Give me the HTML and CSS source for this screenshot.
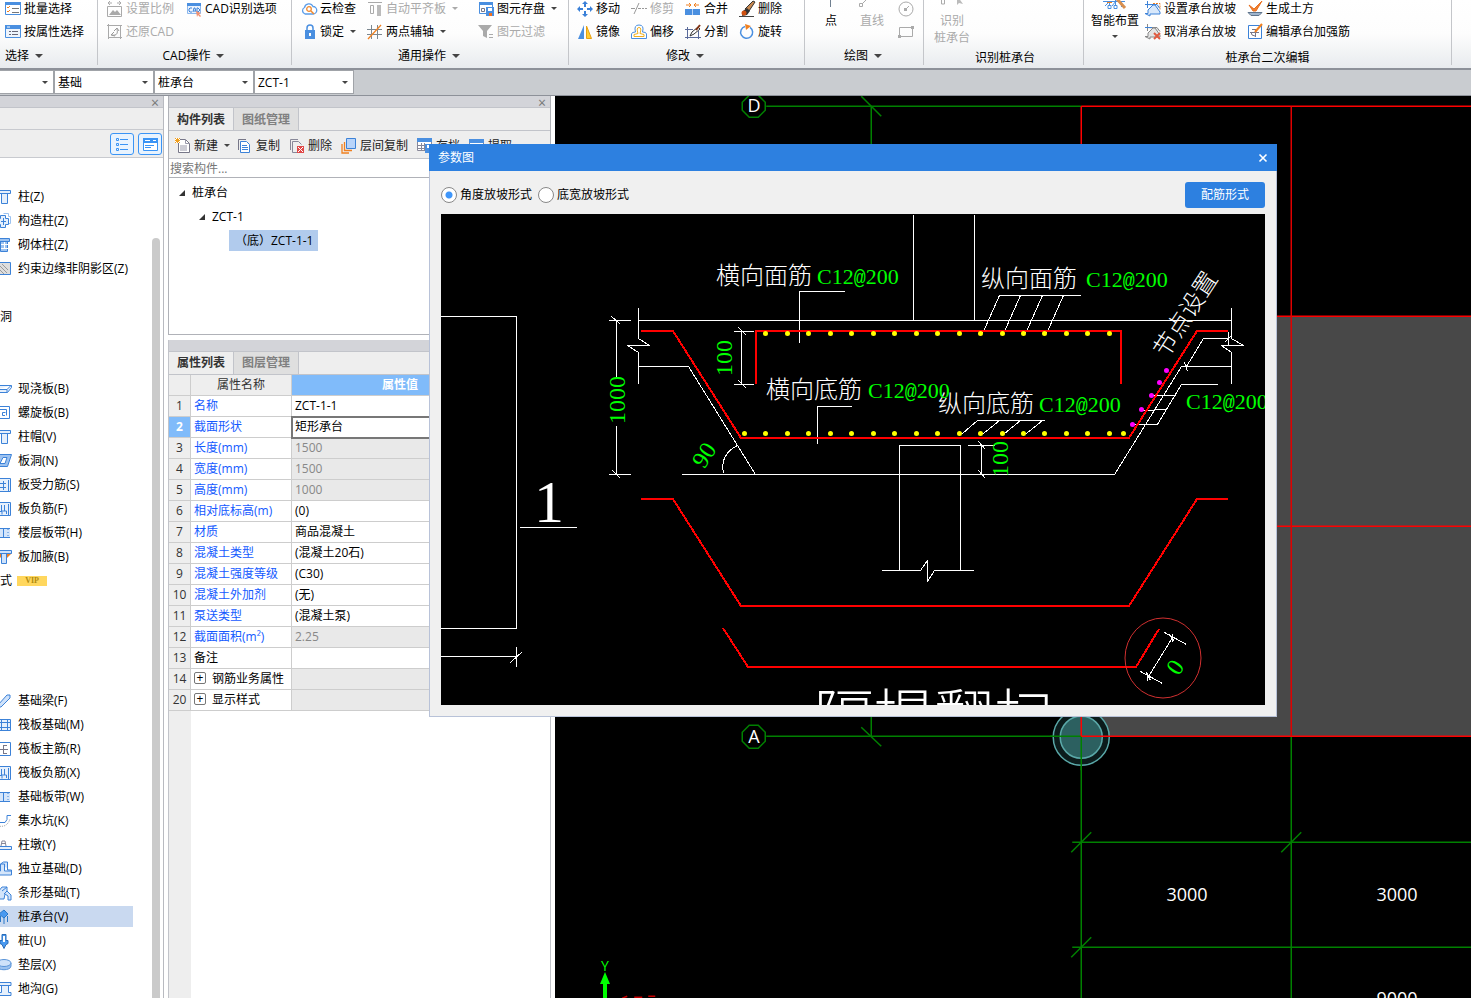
FILE: index.html
```html
<!DOCTYPE html>
<html lang="zh-CN">
<head>
<meta charset="utf-8">
<title>桩承台 - 参数图</title>
<link rel="stylesheet" href="styles.css">
</head>
<body>
<div class="app">
<header class="ribbon">
  <section class="group g-select">
    <div class="tools"><div class="stack">
      <button class="tool"><svg class="icon" viewBox="0 0 16 16"><path d="M.5 1.500h15v12H.5z" fill="#fff" stroke="#4a8fe0"/><path d="M0 1h16v3H0z" fill="#4a8fe0"/><path d="M2 6l1 1 2-2M2 10l1 1 2-2" stroke="#f08020" fill="none"/><path d="M7 7.500h7M7 11.500h7" stroke="#777"/></svg>批量选择</button>
      <button class="tool"><svg class="icon" viewBox="0 0 16 16"><path d="M.5 1.500h15v12H.5z" fill="#eef4fc" stroke="#4a8fe0"/><path d="M0 1h16v4H0z" fill="#4a8fe0"/><path d="M2 3h3" stroke="#fff"/><path d="M4 7.500h2m1 0h6M4 10.500h2m1 0h6" stroke="#667"/></svg>按属性选择</button>
    </div></div>
    <button class="caption">选择<i class="caret"></i></button>
  </section>
  <section class="group g-cad">
    <div class="tools"><div class="stack">
      <button class="tool" disabled><svg class="icon" viewBox="0 0 16 16"><path d="M.5 5.500h14v10H.5z" fill="none" stroke="#aaa"/><path d="M2 14l4-5 2 2 2-2 4 5z" fill="#aaa"/><path d="M1 2h4M10 2h4M3 0L1 2l2 2M12 0l2 2-2 2" stroke="#aaa" fill="none"/></svg>设置比例</button>
      <button class="tool" disabled><svg class="icon" viewBox="0 0 16 16"><path d="M1.500 0v15M0 1.500h15M13.500 1v14M1 13.500h14" fill="none" stroke="#aaa"/><path d="M5 11c5 1 6-2 5-6M7 8l-3 3 4 1M7 7l3-3 2 3" stroke="#999" fill="none"/></svg>还原CAD</button>
    </div><div class="stack">
      <button class="tool"><svg class="icon" viewBox="0 0 16 16"><path d="M1.500 2.500h13v10h-13z" fill="#eaf2fd" stroke="#8cb8ee"/><path d="M1 2h14v3H1z" fill="#4a8fe0"/><path d="M6 7H4l-1 1v2l1 1h2M7 11l1-4h1l1 4M8 10h1M11 7h1l2 2-2 2h-1z" fill="none" stroke="#3c82d8"/><path d="M10 10l5 2-2 1 2 2-1 1-2-2-1 2z" fill="#f09070"/></svg>CAD识别选项</button>
    </div></div>
    <button class="caption">CAD操作<i class="caret"></i></button>
  </section>
  <section class="group g-common">
    <div class="tools"><div class="stack">
      <button class="tool"><svg class="icon" viewBox="0 0 16 16"><path d="M4 13a3.500 3.500 0 0 1-.5-6.500 4.500 4.500 0 0 1 8.500-1 3.700 3.700 0 0 1 0 7.500z" fill="#fff" stroke="#5a9ce8" stroke-width="1.300"/><circle cx="8" cy="8" r="2.300" fill="none" stroke="#f08a30" stroke-width="1.300"/><path d="M10 10l3 3" stroke="#f08a30" stroke-width="1.500"/></svg>云检查</button>
      <button class="tool"><svg class="icon" viewBox="0 0 16 16"><path d="M6 7V4a3 3 0 0 1 6 0v3" fill="none" stroke="#4a8fe0" stroke-width="1.500"/><path d="M4 6h10v9H4z" fill="#4a8fe0"/><path d="M9 9v3" stroke="#fff" stroke-width="2"/></svg>锁定<i class="caret small"></i></button>
    </div><div class="stack wide-gap">
      <button class="tool" disabled><svg class="icon" viewBox="0 0 16 16"><path d="M1 1.500h14" stroke="#aaa"/><path d="M3.500 4.500h3v8h-3z" fill="none" stroke="#aaa"/><path d="M10 4h4v11h-4z" fill="#bbb"/></svg>自动平齐板<i class="caret small"></i></button>
      <button class="tool"><svg class="icon" viewBox="0 0 16 16"><path d="M4.500 1v14M10.500 1v14M0 5.500h15M0 10.500h15" stroke="#7b8790"/><path d="M1 15L14 1" stroke="#f08020" stroke-width="1.300"/></svg>两点辅轴<i class="caret small"></i></button>
    </div><div class="stack">
      <button class="tool"><svg class="icon" viewBox="0 0 16 16"><path d="M1.500 1.500h13v11h-13z" fill="#fff" stroke="#4a8fe0"/><path d="M1 1h14v3H1z" fill="#4a8fe0"/><path d="M3.500 7.500h3v3h-3z" fill="none" stroke="#778"/><path d="M8 6h8v9H8z" fill="#4a8fe0"/><path d="M10 7h4v3h-4z" fill="#fff"/><path d="M11 12h3v3h-3z" fill="#f07020"/></svg>图元存盘<i class="caret small"></i></button>
      <button class="tool" disabled><svg class="icon" viewBox="0 0 16 16"><path d="M0 1h14L9 7v7l-4-2V7z" fill="#aaa"/><path d="M11 10.500h4M11 13.500h4" stroke="#aaa"/></svg>图元过滤</button>
    </div></div>
    <button class="caption">通用操作<i class="caret"></i></button>
  </section>
  <section class="group g-modify">
    <div class="tools"><div class="stack">
      <button class="tool"><svg class="icon" viewBox="0 0 16 16"><path d="M8 0l3 3H9v3H7V3H5zM8 16l3-3H9v-3H7v3H5zM0 8l3-3v2h3v2H3v2zM16 8l-3-3v2h-3v2h3v2z" fill="#3a80d8"/></svg>移动</button>
      <button class="tool"><svg class="icon" viewBox="0 0 16 16"><path d="M1 15L7 1v14z" fill="#4a8fe0"/><path d="M9.500 2v12.500h5z" fill="#fc3" stroke="#e8a010"/></svg>镜像</button>
    </div><div class="stack">
      <button class="tool" disabled><svg class="icon" viewBox="0 0 16 16"><path d="M0 7.500h4M7 7.500h3M11 7.500h2M14 7.500h2M3 13L8 2" stroke="#999"/></svg>修剪</button>
      <button class="tool"><svg class="icon" viewBox="0 0 16 16"><path d="M.5 14.500V10q0-2 4-2-2-7 3.500-7t3.500 7q4 0 4 2v4.500z" fill="#fff" stroke="#4a8fe0"/><path d="M3 12.500v-2l4-1q-2-6 1-6t1 6l4 1v2z" fill="#fff" stroke="#f0b020"/></svg>偏移</button>
    </div><div class="stack">
      <button class="tool"><svg class="icon" viewBox="0 0 16 16"><path d="M0 8h15v6H0z" fill="#4a8fe0"/><path d="M7.500 8v6" stroke="#b8d4f8"/><path d="M1 4h5M9 4h5M4 2l2 2-2 2M11 2L9 4l2 2" stroke="#f08020" fill="none"/></svg>合并</button>
      <button class="tool"><svg class="icon" viewBox="0 0 16 16"><path d="M2.500 3v12M13.500 7v8M0 5.500h8M0 13.500h16" stroke="#5a6a9a" fill="none"/><path d="M5 12l2-4 6-5 2 2-6 5z" fill="#fff" stroke="#333"/><path d="M11 6l4-5" stroke="#803010" stroke-width="2"/></svg>分割</button>
    </div><div class="stack">
      <button class="tool"><svg class="icon" viewBox="0 0 16 16"><path d="M14 0l2 1-6 9-4-2z" fill="#c88850" stroke="#333"/><path d="M8 7l3 3-3 4-5 1 1-5z" fill="#333"/><circle cx="5" cy="12" r="2.500" fill="#d05010"/><path d="M0 15.500h15" stroke="#444"/></svg>删除</button>
      <button class="tool"><svg class="icon" viewBox="0 0 16 16"><path d="M6 2.500a6 6 0 1 0 5 .8" fill="none" stroke="#4a8fe0" stroke-width="1.500"/><path d="M6 0l6 2-5 4z" fill="#f08020"/></svg>旋转</button>
    </div></div>
    <button class="caption">修改<i class="caret"></i></button>
  </section>
  <section class="group g-draw">
    <div class="tools">
      <button class="big"><svg class="icon" viewBox="0 0 16 16"><path d="M7.500 0v10" stroke="#708090"/></svg>点</button>
      <button class="big" disabled><svg class="icon" viewBox="0 0 16 16"><path d="M-3 8L5 0" stroke="#aaa"/><path d="M-4.500 6.500h3v3h-3z" fill="#fff" stroke="#aaa"/></svg>直线</button>
      <div class="stack">
        <button class="tool" aria-label="圆" disabled><svg class="icon" viewBox="0 0 16 16"><circle cx="8" cy="8" r="7" fill="none" stroke="#aaa"/><path d="M8 8l3-3" stroke="#aaa"/><path d="M6 7h3v3H6z" fill="#aaa"/></svg></button>
        <button class="tool" aria-label="矩形" disabled><svg class="icon" viewBox="0 0 16 16"><path d="M1.500 3.500h13v9h-13z" fill="none" stroke="#aaa"/><path d="M13 2h3v3h-3zM0 11h3v3H0z" fill="#aaa"/></svg></button>
      </div>
    </div>
    <button class="caption">绘图<i class="caret"></i></button>
  </section>
  <section class="group g-identify">
    <div class="tools"><button class="big" disabled><svg class="icon" viewBox="0 0 16 16"><path d="M-2.500 -3h3v10h-3z" fill="none" stroke="#aaa"/><path d="M13 0v8l2-2 4 1-5-7z" fill="#bbb"/></svg>识别<br>桩承台</button></div>
    <div class="caption">识别桩承台</div>
  </section>
  <section class="group g-edit">
    <div class="tools">
      <button class="big"><svg class="icon xl" viewBox="0 0 28 16"><path d="M2 4.500h22M8.500 4v7M14.500 3v8M20.500 4v6M4 9l5-5M11 9l4-5" stroke="#4a8fe0" fill="none"/><path d="M7 8.500h3v3H7zM13 8.500h3v3h-3z" fill="#fff" stroke="#4a8fe0"/><path d="M16 2l8 9" stroke="#d89050" stroke-width="3"/><path d="M6 5.500h5" stroke="#f08020"/></svg>智能布置<i class="caret small"></i></button>
      <div class="stack">
        <button class="tool"><svg class="icon" viewBox="0 0 16 16"><path d="M2.500 0v7M0 3.500h12l3 4M0 12.500h3L3 9l5-5h2l5 7v2H5v2z" fill="#d8e8fb" stroke="#3c82d8"/><path d="M8 2.500h7v6" stroke="#f08020" stroke-dasharray="2 1" fill="none"/></svg>设置承台放坡</button>
        <button class="tool"><svg class="icon" viewBox="0 0 16 16"><path d="M2.500 0v7M0 3.500h12l3 4M0 12.500h3L3 9l5-5h2l5 7v2H5v2z" fill="#e4e4e4" stroke="#888"/><path d="M0 3.500h7" stroke="#3c82d8"/><path d="M9 9l6 6M15 9l-6 6" stroke="#e05a40" stroke-width="2"/></svg>取消承台放坡</button>
      </div>
      <div class="stack">
        <button class="tool"><svg class="icon" viewBox="0 0 16 16"><path d="M2 4l5 4 8-8-6 10H6z" fill="#f08030" stroke="#e87020"/><path d="M1 11.500h14l-3 3H4z" fill="#9fb4cc" stroke="#60748c"/></svg>生成土方</button>
        <button class="tool"><svg class="icon" viewBox="0 0 16 16"><path d="M1.500 1.500h13v13h-13z" fill="#fff" stroke="#3c82d8"/><path d="M3 8.500h9M8.500 5v8M4 8q0 4 4 4M5 5.500h4" stroke="#778" fill="none"/><path d="M8 8l7-8" stroke="#f08020" stroke-width="2"/></svg>编辑承台加强筋</button>
      </div>
    </div>
    <div class="caption">桩承台二次编辑</div>
  </section>
</header>

<nav class="selectors">
  <label class="combo first"><select aria-label="楼层"><option></option></select></label>
  <label class="combo"><select aria-label="构件分类"><option>基础</option></select></label>
  <label class="combo"><select aria-label="构件类型"><option>桩承台</option></select></label>
  <label class="combo"><select aria-label="构件"><option>ZCT-1</option></select></label>
</nav>

<main class="work">
  <aside class="nav-panel">
    <div class="panel-bar"><button class="close" aria-label="关闭">×</button></div>
    <div class="nav-title"></div>
    <div class="nav-tools">
      <button aria-label="列表视图"><svg viewBox="0 0 22 20"><path d="M5.500 4.500h2v2h-2zM5.500 9.500h2v2h-2zM5.500 14.500h2v2h-2zM9 5.500h8M9 10.500h8M9 15.500h8" fill="none" stroke="#3a94f5"/></svg></button>
      <button aria-label="窗口视图"><svg viewBox="0 0 22 20"><path d="M4.500 4.500h14v12h-14z" fill="#fff" stroke="#3a94f5"/><path d="M4 4h15v5H4z" fill="#3a94f5"/><path d="M6 6.500h5M14 6.500h3" stroke="#fff"/><path d="M6 11.500h9M6 13.500h6" stroke="#3a94f5"/></svg></button>
    </div>
    <div class="nav-list">
      <div class="items">
        <button class="item"><svg class="icon" viewBox="0 0 16 16"><path d="M0 1.500h14.500v3H0M5.500 4.500h6v10h-6z" fill="#e6f0fc" stroke="#3c82d8"/></svg>柱(Z)</button>
        <button class="item"><svg class="icon" viewBox="0 0 16 16"><path d="M7.500.5h5v3h2v7h-2" fill="none" stroke="#9cc2f0"/><path d="M4.500 2.500h5v3h3v6h-3v3h-5v-3H2v-6h2.500z" fill="#e6f0fc" stroke="#3c82d8"/><path d="M7.500 5v7M5 8.500h5" stroke="#3c82d8"/></svg>构造柱(Z)</button>
        <button class="item"><svg class="icon" viewBox="0 0 16 16"><path d="M0 1.500h13.500v3H0M4.500 4.500h7v10h-7z" fill="#9cc2f0" stroke="#3c82d8"/><path d="M5 7.500h7M5 11.500h7M8.500 5v3M8.500 8v4" stroke="#fff"/></svg>砌体柱(Z)</button>
        <button class="item"><svg class="icon" viewBox="0 0 16 16"><path d="M0 1.500h14.500v12H0" fill="#ddd" stroke="#3c82d8"/><path d="M2 7l6 6M2 3l9 9M6 3l6 6" stroke="#999"/></svg>约束边缘非阴影区(Z)</button>
      </div>
      <div class="items gap-one"><button class="heading">洞</button></div>
      <div class="items gap-two">
        <button class="item"><svg class="icon" viewBox="0 0 16 16"><path d="M0 4.500h15.500v2l-4 5H0M0 8.500h11l4-4M11 8.500v3" fill="#e6f0fc" stroke="#3c82d8"/></svg>现浇板(B)</button>
        <button class="item"><svg class="icon" viewBox="0 0 16 16"><path d="M0 1.500h13.500v12H0M9 10.500H6.500v-3h3M4 4.500h6.500v6" fill="none" stroke="#3c82d8"/></svg>螺旋板(B)</button>
        <button class="item"><svg class="icon" viewBox="0 0 16 16"><path d="M0 1.500h14.500v3H0M5.500 4.500h6v10h-6z" fill="#e6f0fc" stroke="#3c82d8"/></svg>柱帽(V)</button>
        <button class="item"><svg class="icon" viewBox="0 0 16 16"><path d="M2 1.500h13.500l-4 12H0z" fill="#9cc2f0" stroke="#3c82d8"/><path d="M7 4.500h4l-2 6H4z" fill="#fff" stroke="#3c82d8"/></svg>板洞(N)</button>
        <button class="item"><svg class="icon" viewBox="0 0 16 16"><path d="M0 1.500h14.500v13H0M12.500 3v11" fill="#e6f0fc" stroke="#3c82d8"/><path d="M2 6.500h8M2 10.500h8M7.500 4v9" stroke="#3c82d8"/></svg>板受力筋(S)</button>
        <button class="item"><svg class="icon" viewBox="0 0 16 16"><path d="M0 1.500h14.500v13H0M12.500 3v11" fill="#e6f0fc" stroke="#3c82d8"/><path d="M5.500 4v6h5v3M8.500 4v6M2 10.500h4v3" stroke="#3c82d8" fill="none"/></svg>板负筋(F)</button>
        <button class="item"><svg class="icon" viewBox="0 0 16 16"><path d="M0 3h14v10H0z" fill="#d4e5fa"/><path d="M0 3.500h14M0 12.500h14M7.500 3v10" stroke="#3c82d8"/><path d="M12 4v9" stroke="#3c82d8" stroke-dasharray="1 2"/></svg>楼层板带(H)</button>
        <button class="item"><svg class="icon" viewBox="0 0 16 16"><path d="M0 4h16l-5 5H5z" fill="#f08020"/><path d="M0 1.500h15.500v3H0M5.500 4.500h5v10h-5z" fill="#cfe2fa" stroke="#3c82d8"/></svg>板加腋(B)</button>
        <button class="heading">式<span class="vip">VIP</span></button>
      </div>
      <div class="items gap-four">
        <button class="item"><svg class="icon" viewBox="0 0 16 16"><path d="M2 12L11 2h3v3L5 14H2z" fill="#cfe2fa" stroke="#3c82d8"/></svg>基础梁(F)</button>
        <button class="item"><svg class="icon" viewBox="0 0 16 16"><path d="M0 2.500h14.500v11H0M5.500 2v12M11.500 2v12M0 5.500h14M0 10.500h14" fill="#e6f0fc" stroke="#3c82d8"/></svg>筏板基础(M)</button>
        <button class="item"><svg class="icon" viewBox="0 0 16 16"><path d="M0 1.500h14.500v13H0" fill="#fff" stroke="#3c82d8"/><path d="M3 8.500h9M7.500 4v9M8 4.500h3M8 12.500h3" stroke="#778"/></svg>筏板主筋(R)</button>
        <button class="item"><svg class="icon" viewBox="0 0 16 16"><path d="M0 1.500h14.500v13H0M12.500 3v11" fill="#e6f0fc" stroke="#3c82d8"/><path d="M5.500 4v6h5v3M8.500 4v6M2 10.500h4v3" stroke="#3c82d8" fill="none"/></svg>筏板负筋(X)</button>
        <button class="item"><svg class="icon" viewBox="0 0 16 16"><path d="M0 3h14v10H0z" fill="#d4e5fa"/><path d="M0 3.500h14M0 12.500h14M7.500 3v10" stroke="#3c82d8"/><path d="M12 4v9" stroke="#3c82d8" stroke-dasharray="1 2"/></svg>基础板带(W)</button>
        <button class="item"><svg class="icon" viewBox="0 0 16 16"><path d="M15 2.500h-4v4l-2 3H2" fill="none" stroke="#3c82d8"/><path d="M2 13q9 2 12-7" fill="none" stroke="#999" stroke-dasharray="1 1"/></svg>集水坑(K)</button>
        <button class="item"><svg class="icon" viewBox="0 0 16 16"><path d="M0 9.500h15.500v3H0" fill="#e6f0fc" stroke="#3c82d8"/><path d="M5 9l1-5h3l1 5M5 6.500h5" fill="#fff" stroke="#889"/></svg>柱墩(Y)</button>
        <button class="item"><svg class="icon" viewBox="0 0 16 16"><path d="M4.500 10V3l3-2h4v8h4v5H2v-4zM4.500 3h4v7h7" fill="#d4e5fa" stroke="#3c82d8"/></svg>独立基础(D)</button>
        <button class="item"><svg class="icon" viewBox="0 0 16 16"><path d="M2 14V7l4-5h5v4l4 4v5h-3v-4l-3-2-1 5zM6 6l5-4M8 9l3-3" fill="#d4e5fa" stroke="#3c82d8"/></svg>条形基础(T)</button>
        <button class="item selected"><svg class="icon" viewBox="0 0 16 16"><path d="M3 5l5-4 4 4-4 4zM4.500 7v6M8 8v7M11.500 7v6" fill="#4a9af0" stroke="#2a78c8"/></svg>桩承台(V)</button>
        <button class="item"><svg class="icon" viewBox="0 0 16 16"><path d="M6 1.500h4v6h2v3l-2 1-2 4-2-4-2-1v-3h2z" fill="#4a9af0" stroke="#2a6cb8"/><path d="M8 3v6" stroke="#fff" stroke-width="2"/></svg>桩(U)</button>
        <button class="item"><svg class="icon" viewBox="0 0 16 16"><path d="M1 6v3c0 5 14 5 14 0V6" fill="#9cc2f0" stroke="#5a94d8"/><ellipse cx="8" cy="6" rx="7" ry="3.500" fill="#cfe2fa" stroke="#5a94d8"/></svg>垫层(X)</button>
        <button class="item"><svg class="icon" viewBox="0 0 16 16"><path d="M0 1.500h15v3H0M5.500 4.500v7H2v3h13v-3h-2.500v-7" fill="#e6f0fc" stroke="#3c82d8"/></svg>地沟(G)</button>
      </div>
      <div class="thumb"></div>
    </div>
  </aside>

  <section class="mid">
    <div class="component-panel">
      <div class="panel-bar"><button class="close" aria-label="关闭">×</button></div>
      <div class="tabs"><button class="tab active">构件列表</button><button class="tab">图纸管理</button></div>
      <div class="toolbar">
        <button class="tool"><svg class="icon" viewBox="0 0 16 16"><path d="M3.500 1.500h7l4 4v9h-11z" fill="#fff" stroke="#778"/><path d="M10.500 1.500v4h4M5 8h7M5 10h7M5 12h7" stroke="#99a" fill="none"/><path d="M0 0h5v5H0z" fill="#fff"/><path d="M0 0l5 5M5 0L0 5M2.500 0v5M0 2.500h5" stroke="#f0a020"/></svg>新建<i class="caret small"></i></button>
        <button class="tool"><svg class="icon" viewBox="0 0 16 16"><path d="M1.500 12V1.500H9" fill="none" stroke="#778"/><path d="M3.500 3.500h6l3 3v8h-9z" fill="#fff" stroke="#3c82d8"/><path d="M5 7.500h5M5 9.500h6M5 11.500h6" stroke="#3c82d8"/></svg>复制</button>
        <button class="tool"><svg class="icon" viewBox="0 0 16 16"><path d="M1.500 12V1.500H9M9 14.500H3.500v-11h6l3 3" fill="none" stroke="#889"/><path d="M8 8h7v7H8z" fill="#e04848"/><path d="M9 9l5 5M14 9l-5 5" stroke="#fff"/></svg>删除</button>
        <button class="tool"><svg class="icon" viewBox="0 0 16 16"><path d="M1 6v9h7M3.500 4v8.500H11" fill="none" stroke="#f08020" stroke-width="1.300"/><path d="M5.500.5h9v10h-9z" fill="#b8d4fa" stroke="#3c82d8"/></svg>层间复制</button>
        <button class="tool"><svg class="icon" viewBox="0 0 16 16"><path d="M.5.500h14v12H.5z" fill="#fff" stroke="#889"/><path d="M1 7.500h8M1 10.500h8M4.500 5v8M7.500 5v8" stroke="#889"/><path d="M0 0h15v4H0z" fill="#4a8fe0"/><path d="M8 6h8v9H8z" fill="#4a8fe0"/><path d="M10 7h4v3h-4z" fill="#fff"/></svg>存档</button>
        <button class="tool"><svg class="icon" viewBox="0 0 16 16"><path d="M.5 2.500h14v12H.5z" fill="#fff" stroke="#889"/><path d="M0 1h15v4H0z" fill="#4a8fe0"/><path d="M3 7.500h6M3 10.500h4" stroke="#889"/></svg>提取</button>
        <button class="more" aria-label="更多">»</button>
      </div>
      <input class="search" type="text" placeholder="搜索构件..." aria-label="搜索构件">
      <div class="tree">
        <div class="node l1"><i class="open"></i>桩承台</div>
        <div class="node l2"><i class="open"></i>ZCT-1</div>
        <div class="node l3"><span>（底）ZCT-1-1</span></div>
      </div>
    </div>
    <div class="property-panel">
      <div class="panel-bar"></div>
      <div class="tabs"><button class="tab active">属性列表</button><button class="tab">图层管理</button></div>
      <div class="grid-area">
      <table class="props">
        <colgroup><col class="c-num"><col class="c-name"><col class="c-value"><col></colgroup>
        <thead><tr><th></th><th>属性名称</th><th class="value-head">属性值</th><th></th></tr></thead>
        <tbody>
          <tr><th>1</th><td class="link">名称</td><td>ZCT-1-1</td><td></td></tr>
          <tr class="current"><th>2</th><td class="link">截面形状</td><td class="focus">矩形承台</td><td></td></tr>
          <tr class="locked"><th>3</th><td class="link">长度(mm)</td><td>1500</td><td></td></tr>
          <tr class="locked"><th>4</th><td class="link">宽度(mm)</td><td>1500</td><td></td></tr>
          <tr class="locked"><th>5</th><td class="link">高度(mm)</td><td>1000</td><td></td></tr>
          <tr><th>6</th><td class="link">相对底标高(m)</td><td>(0)</td><td></td></tr>
          <tr><th>7</th><td class="link">材质</td><td>商品混凝土</td><td></td></tr>
          <tr><th>8</th><td class="link">混凝土类型</td><td>(混凝土20石)</td><td></td></tr>
          <tr><th>9</th><td class="link">混凝土强度等级</td><td>(C30)</td><td></td></tr>
          <tr><th>10</th><td class="link">混凝土外加剂</td><td>(无)</td><td></td></tr>
          <tr><th>11</th><td class="link">泵送类型</td><td>(混凝土泵)</td><td></td></tr>
          <tr class="locked"><th>12</th><td class="link">截面面积(m²)</td><td>2.25</td><td></td></tr>
          <tr><th>13</th><td>备注</td><td></td><td></td></tr>
          <tr class="locked"><th>14</th><td><button class="plus" aria-label="展开">+</button>钢筋业务属性</td><td></td><td></td></tr>
          <tr class="locked"><th>20</th><td><button class="plus" aria-label="展开">+</button>显示样式</td><td></td><td></td></tr>
        </tbody>
      </table>
      </div>
    </div>
  </section>

  <section class="canvas">
    <svg viewBox="555 96 916 902" preserveAspectRatio="xMinYMin slice">
      <path d="M1081 316H2000V736H1081z" fill="#484848"/>
      <g transform="translate(.25 .25)" fill="none" stroke-width="1.500">
        <path d="M766 106H1081M871 106V736M766 736H1081M1081 736V1100M1291 736V1100M1072 842H2000M1072 947H2000" stroke="#008000"/>
        <path d="M861 96L881 116M861 727L881 746M1071 852L1091 832M1281 852L1301 832M1071 957L1091 937" stroke="#008000"/>
        <circle cx="1081" cy="737" r="28" fill="#0c1c1c" stroke="#5aa8a8"/>
        <circle cx="1081" cy="737" r="21" fill="#2c6060" stroke="#5aa8a8"/>
        <path d="M1050 736H1081V770" stroke="#008000"/>
        <path d="M1081 106H2000M1081 106V736M1081 316H2000M1081 526H2000M1081 736H2000" stroke="#f00"/>
        <path d="M1291 106V736" stroke="#e00000"/>
        <path d="M749 95h9l7 7v8l-7 7h-9l-7-7v-8zM749 725h9l7 7v9l-7 7h-9l-7-7v-9z" stroke="#008000"/>
        <path d="M622 998l5-2M634 997h8M648 996h7" stroke="#c80000"/>
      </g>
      <path d="M605 998V980" stroke="#0f0" stroke-width="4"/>
      <path d="M600 984L605 972L610 984z" fill="#0f0"/>
      <g class="axis-text">
        <text x="754" y="112">D</text><text x="754" y="743">A</text>
        <text x="1187" y="901">3000</text><text x="1397" y="901">3000</text><text x="1397" y="1005">9000</text>
        <text x="605" y="971" class="axis-y">Y</text>
      </g>
    </svg>
  </section>
</main>

<div class="dialog" role="dialog" aria-label="参数图">
  <div class="dialog-title"><span>参数图</span><button aria-label="关闭"><svg viewBox="0 0 10 10"><path d="M1.500 1.500l7 7M8.500 1.500l-7 7" stroke="#fff" stroke-width="1.600"/></svg></button></div>
  <div class="dialog-body">
    <div class="options">
      <label><input type="radio" name="slope" checked>角度放坡形式</label>
      <label><input type="radio" name="slope">底宽放坡形式</label>
      <button class="primary">配筋形式</button>
    </div>
    <div class="drawing">
    <svg viewBox="441 214 824 491" preserveAspectRatio="xMinYMin slice">
      <g fill="none" shape-rendering="crispEdges">
        <g stroke="#fff" transform="translate(.5 .5)">
          <path d="M440 316H516V628H440M440 656H516M516 646V666M510 662L522 651M519 527H576"/>
          <path d="M608 320H630M616 320V376M616 425V474M608 474H630M611 316L620 324M612 470L620 478"/>
          <path d="M638 307V338L649 345H627L638 352V383M638 320H1231M638 366H688L755 474M681 474H1114L1181 366H1231"/>
          <path d="M733 331H753M741 331V384M733 384H753M738 327L746 335M738 380L746 388"/>
          <path d="M844 291H799V342M851 406H817V443M913 214V320M974 214V320"/>
          <path d="M1080 295H999L982 333M1020 295L1003 333M1042 295L1025 333M1063 295L1046 333"/>
          <path d="M1044 420H977L962 433M999 420L983 433M1020 420L1004 433M1042 420L1026 433"/>
          <path d="M1231 307V338L1243 345H1221L1231 352V383M1228 331V345M1224 342L1231 335M1228 338H1203L1186 366M1184 362L1187 371"/>
          <path d="M1217 384H1181L1157 424H1132M1175 395H1151M1166 409L1142 410"/>
          <path d="M723 473Q719 454 737 445"/>
          <path d="M899 570V445H960V570M881 570H920L927 560V581L934 570H973"/>
          <path d="M967 445H994M981 445V474M978 441L985 449M978 470L985 478"/>
          <path d="M1172 637L1148 676M1164 632L1186 644M1140 671L1162 683M1169 634L1174 641M1172 633V641M1146 672L1150 680M1147 673V680"/>
        </g>
        <g stroke="#f00" stroke-width="2">
          <path d="M641 331H673L741 438H1129L1197 331H1228"/>
          <path d="M756 384V331H1121V384"/>
          <path d="M641 499H673L741 606H1129L1197 499H1228M723 628L748 667H1136L1159 629"/>
        </g>
        <ellipse cx="1163" cy="658" rx="38" ry="40" stroke="#d03030" shape-rendering="auto"/>
        <g stroke="#ff0" stroke-width="5" stroke-linecap="round" shape-rendering="auto" transform="translate(.5 .5)">
          <path d="M765 333h0M787 333h0M808 333h0M830 333h0M851 333h0M873 333h0M894 333h0M916 333h0M937 333h0M959 333h0M980 333h0M1002 333h0M1023 333h0M1044 333h0M1066 333h0M1087 333h0M1109 333h0"/>
          <path d="M744 433h0M765 433h0M787 433h0M808 433h0M830 433h0M851 433h0M873 433h0M894 433h0M916 433h0M937 433h0M959 433h0M980 433h0M1002 433h0M1023 433h0M1044 433h0M1066 433h0M1087 433h0M1109 433h0M1123 433h0"/>
        </g>
        <path d="M1166 370h0M1159 382h0M1151 395h0M1141 409h0M1132 424h0" stroke="#f0f" stroke-width="5" stroke-linecap="round" shape-rendering="auto" transform="translate(.5 .5)"/>
      </g>
      <g class="note">
        <text x="716" y="284">横向面筋</text><text x="981" y="287">纵向面筋</text>
        <text x="766" y="398">横向底筋</text><text x="938" y="412">纵向底筋</text>
        <text transform="translate(1185 314) rotate(-57)" y="9" text-anchor="middle">节点设置</text>
        <text class="huge" x="814" y="739">隔提翻扫</text>
        <text class="mark" x="534" y="522">1</text>
      </g>
      <g class="value">
        <text x="817" y="284">C12<tspan class="at">@</tspan>200</text>
        <text x="1086" y="287">C12<tspan class="at">@</tspan>200</text>
        <text x="868" y="398">C12<tspan class="at">@</tspan>200</text>
        <text x="1039" y="412">C12<tspan class="at">@</tspan>200</text>
        <text x="1186" y="409">C12<tspan class="at">@</tspan>200</text>
        <g class="digits">
          <text transform="translate(625 424) rotate(-90)">1000</text>
          <text transform="translate(732 376) rotate(-90)">100</text>
          <text transform="translate(1008 477) rotate(-90)">100</text>
          <text transform="translate(704 455) rotate(-57)" y="8" text-anchor="middle">90</text>
          <text transform="translate(1175 667) rotate(-57)" y="8" text-anchor="middle">0</text>
        </g>
      </g>
    </svg>
    </div>
  </div>
</div>
</div>
</body>
</html>
```

FILE: styles.css
```css
* { box-sizing: border-box; }
body {
  margin: 0;
  font: 12px/16px "Open Sans", "Noto Sans CJK SC", sans-serif;
  color: #000;
  background: #fff;
}
button, input, select { font: inherit; color: inherit; }
button { margin: 0; padding: 0; border: 0; background: none; white-space: nowrap; }
.app {
  position: relative;
  display: flex;
  flex-direction: column;
  height: 100vh;
  overflow: hidden;
}
.icon { width: 16px; height: 16px; flex: none; overflow: visible; }
.caret {
  width: 0;
  height: 0;
  margin-left: 6px;
  border: 4px solid transparent;
  border-top-color: #444;
  border-bottom: 0;
}
.caret.small { margin-left: 3px; border-width: 3px; border-bottom: 0; }
:disabled { color: #aaa; }
:disabled .caret { border-top-color: #aaa; }

/* Ribbon */
.ribbon {
  display: flex;
  flex: none;
  height: 70px;
  overflow: hidden;
  background: linear-gradient(#fff, #fdfdfd 50%, #e8ebee);
  border-bottom: 2px solid #8d9199;
}
.group {
  position: relative;
  flex: none;
  height: 72px;
  margin-top: -3px;
}
.group::after {
  content: "";
  position: absolute;
  top: 0;
  right: 0;
  width: 1px;
  height: 68px;
  background: #c4c6ca;
}
.tools { display: flex; height: 46px; gap: 11px; }
.tool { display: flex; align-items: center; height: 23px; gap: 3px; }
.caption {
  display: flex;
  align-items: center;
  justify-content: center;
  width: 100%;
  height: 26px;
}
.g-select { width: 98px; padding-left: 5px; }
.g-select .caption { justify-content: flex-start; }
.g-cad { width: 194px; padding-left: 9px; }
.g-cad .tools { gap: 12px; }
.g-common { width: 277px; padding-left: 9px; }
.g-common .wide-gap { margin-right: 9px; }
.g-modify { width: 236px; padding-left: 8px; }
.g-draw { width: 119px; padding-left: 11px; }
.g-draw .tools { gap: 8px; }
.g-draw .big { width: 30px; }
.g-draw .big + .big { width: 36px; }
.g-identify { width: 160px; padding-left: 10px; }
.g-edit { width: 368px; padding-left: 7px; }
.g-edit .tools { gap: 6px; }
.g-edit .stack + .stack { margin-left: 5px; }
.g-common .caption, .g-modify .caption, .g-cad .caption { margin-left: -6px; }
.g-draw .caption { margin-left: -7px; }
.g-identify .caption, .g-edit .caption { height: 29px; margin-left: -4px; }
.big {
  display: flex;
  flex-direction: column;
  align-items: center;
  line-height: 17px;
}
.big .icon { margin-bottom: -1px; }
.big .caret { margin: 6px 0 0; }
.icon.xl { width: 28px; }

/* Selector strip */
.selectors {
  display: flex;
  flex: none;
  height: 26px;
  background: #c9ccd0;
  border-bottom: 1px solid #8d9199;
}
.combo {
  position: relative;
  width: 100px;
  height: 24px;
  border: 1px solid #a0a3a8;
  background: #fff;
}
.combo.first { width: 54px; border-left: 0; }
.combo select {
  width: 100%;
  height: 22px;
  padding: 2px 3px 0;
  border: 0;
  appearance: none;
  background: none;
}
.combo::after {
  content: "";
  position: absolute;
  top: 10px;
  right: 5px;
  border: 3px solid transparent;
  border-top-color: #444;
  border-bottom: 0;
}

/* Work area */
.work { display: flex; flex: 1; min-height: 0; }
.panel-bar {
  display: flex;
  flex: none;
  justify-content: flex-end;
  height: 12px;
  background: #d3d4d9;
  border-bottom: 1px solid #c2c4ca;
}
.close { width: 16px; font-size: 14px; line-height: 13px; color: #777; }
.nav-panel {
  display: flex;
  flex: none;
  flex-direction: column;
  width: 164px;
  border-right: 1px solid #b8bac0;
}
.nav-title { flex: none; height: 22px; background: #eee; border-bottom: 1px solid #c8cacf; }
.nav-tools {
  display: flex;
  flex: none;
  justify-content: flex-end;
  gap: 4px;
  height: 28px;
  padding: 3px 1px 2px;
  background: #eee;
  border-bottom: 1px solid #c8cacf;
}
.nav-tools button {
  width: 24px;
  height: 22px;
  border: 1px solid #3a94f5;
  border-radius: 3px;
  background: #e8f3fe;
}
.nav-tools svg { display: block; width: 22px; height: 20px; }
.nav-list {
  position: relative;
  flex: 1;
  min-height: 0;
  padding-top: 27px;
  overflow: hidden;
}
.items { display: flex; flex-direction: column; width: 133px; }
.gap-one { margin-top: 24px; }
.gap-two { margin-top: 48px; }
.gap-four { margin-top: 96px; }
.item {
  display: flex;
  align-items: center;
  gap: 6px;
  height: 21px;
  margin: 1px 0 2px;
}
.item .icon { margin-left: -4px; }
.item.selected { background: #c9d9f0; }
.heading { display: flex; align-items: center; height: 24px; gap: 5px; }
.vip {
  width: 30px;
  height: 10px;
  font: bold 8px/10px "Liberation Serif", serif;
  color: #b08a10;
  background: #ffd75e;
}
.thumb {
  position: absolute;
  top: 80px;
  right: 3px;
  bottom: 0;
  width: 8px;
  border-radius: 4px 4px 0 0;
  background: #cacaca;
}
.mid {
  display: flex;
  flex: none;
  flex-direction: column;
  gap: 5px;
  width: 391px;
  padding: 0 4px;
}
.component-panel {
  display: flex;
  flex: none;
  flex-direction: column;
  border: 1px solid #b0b2b8;
  border-top: 0;
}
.tabs {
  display: flex;
  flex: none;
  height: 23px;
  background: #eee;
  border-bottom: 1px solid #c2c4ca;
}
.tab {
  width: 65px;
  padding-top: 1px;
  border-right: 1px solid #c2c4ca;
  color: #808080;
  background: #dfdfdf;
  font-weight: bold;
}
.tab.active { color: #333; background: #eee; }
.toolbar {
  display: flex;
  gap: 9px;
  height: 28px;
  padding: 3px 1px 0 6px;
  background: #eee;
  border-bottom: 1px solid #c2c4ca;
  color: #222;
}
.toolbar .tool:first-child { margin-right: -2px; }
.more { margin-left: auto; font-size: 16px; }
.search {
  height: 19px;
  padding: 0 1px;
  border: 0;
  border-bottom: 1px solid #b0b2b8;
  outline: 0;
}
.search::placeholder { color: #777; opacity: 1; }
.tree { height: 156px; padding-top: 3px; }
.node { display: flex; align-items: center; height: 24px; }
.open {
  margin-right: 7px;
  border: 3px solid transparent;
  border-right-color: #333;
  border-bottom-color: #333;
}
.l1 { padding-left: 10px; }
.l2 { padding-left: 30px; }
.l3 { height: 23px; padding-left: 60px; }
.l3 span { padding: 0 5px 0 6px; line-height: 21px; background: #b1cbed; }
.property-panel {
  display: flex;
  flex: 1;
  flex-direction: column;
  min-height: 0;
  border: solid #c2c4ca;
  border-width: 0 1px;
}
.property-panel .tab { padding-top: 0; }
.grid-area { flex: 1; background: linear-gradient(90deg, #eee 22px, #fff 22px); }
.props {
  width: 100%;
  table-layout: fixed;
  border-collapse: separate;
  border-spacing: 0;
}
.c-num { width: 22px; }
.c-name { width: 101px; }
.c-value { width: 217px; }
.props th, .props td {
  height: 21px;
  padding: 0 3px;
  border: solid #cdcdcd;
  border-width: 0 1px 1px 0;
  font-weight: normal;
  line-height: 16px;
  text-align: left;
  white-space: nowrap;
}
.props td { background: #fff; }
.props th { padding: 0; text-align: center; color: #333; background: #eee; }
.props .value-head { color: #fff; background: #80bbfa; font-weight: bold; }
.props .link { color: #145aff; }
.props .locked td:nth-child(n+3) { background: #e9e9e9; color: #888; }
.props .current th { background: #80bbfa; color: #fff; font-weight: bold; }
.props .focus { outline: 2px solid #777; outline-offset: -1px; }
.plus {
  width: 12px;
  height: 12px;
  margin-right: 6px;
  border: 1px solid #777;
  border-radius: 2px;
  line-height: 10px;
  vertical-align: 1px;
}
.canvas { flex: 1; min-width: 0; background: #000; }
.canvas svg { display: block; width: 100%; height: 100%; }
.axis-text { fill: #fff; font: 18px "Open Sans", sans-serif; text-anchor: middle; }
.axis-y { fill: #0f0; font-size: 14px; }

/* Parameter dialog */
.dialog {
  position: absolute;
  top: 144px;
  left: 429px;
  width: 848px;
  height: 573px;
  display: flex;
  flex-direction: column;
  border: 1px solid #b8c2d8;
  border-top: 0;
  background: #f0f0f0;
}
.dialog-title {
  display: flex;
  flex: none;
  align-items: center;
  justify-content: space-between;
  height: 27px;
  margin: 0 -1px;
  padding: 0 9px;
  color: #fff;
  background: #2d80e0;
}
.dialog-title svg { display: block; width: 10px; height: 10px; }
.dialog-body {
  display: flex;
  flex: 1;
  flex-direction: column;
  min-height: 0;
  padding: 11px;
}
.options { display: flex; flex: none; gap: 6px; height: 32px; }
.options label { display: flex; align-items: center; gap: 3px; height: 26px; }
.options input {
  width: 16px;
  height: 16px;
  margin: 0;
  appearance: none;
  border: 1px solid #888;
  border-radius: 50%;
  background: #fff;
}
.options input:checked { background: radial-gradient(circle, #3f96fa 3px, #fff 4px); }
.primary {
  width: 80px;
  height: 26px;
  margin-left: auto;
  border-radius: 3px;
  color: #fff;
  background: #2d80e0;
}
.drawing { flex: 1; min-height: 0; background: #000; }
.drawing svg { display: block; width: 100%; height: 100%; }
.note { fill: #fff; font: 300 24px "Noto Sans CJK SC", sans-serif; }
.huge { font-size: 60px; }
.mark { font: 60px "Liberation Serif", serif; }
.value { fill: #0f0; font: 22px "Liberation Serif", serif; }
.value .at { font: 20px "Liberation Mono", monospace; }
.digits { font-size: 24px; }
```
